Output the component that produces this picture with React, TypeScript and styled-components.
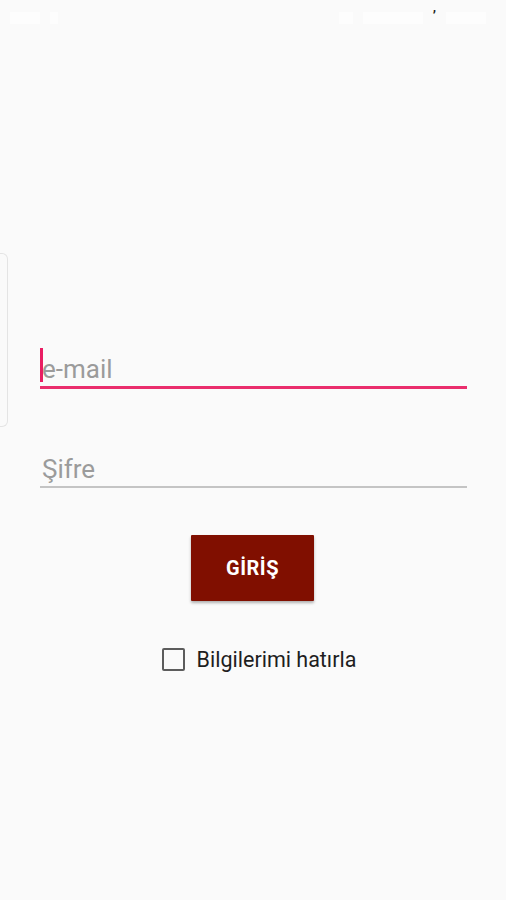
import React from 'react'
import styled, { createGlobalStyle } from 'styled-components'

const GlobalStyle = createGlobalStyle`
  html, body {
    margin: 0;
    padding: 0;
    background: #fafafa;
    font-family: Roboto, "Noto Sans", sans-serif;
  }
  * { box-sizing: border-box; }
`

export default function App() {
  return (
    <>
      <GlobalStyle />
      <Screen>
        <StatusBar>
          <StatusGroup>
            <Faint $w={30} />
            <Faint $w={8} />
          </StatusGroup>
          <StatusGroup>
            <Faint $w={14} />
            <Faint $w={60} />
            <Mark>’</Mark>
            <Faint $w={40} />
          </StatusGroup>
        </StatusBar>
        <SideTab />
        <Form>
          <Field>
            <Caret />
            <TextInput placeholder="e-mail" $active />
          </Field>
          <Field $gap={63}>
            <TextInput placeholder="Şifre" type="password" />
          </Field>
          <LoginButton>GİRİŞ</LoginButton>
          <RememberRow>
            <Box />
            <RememberText>Bilgilerimi hatırla</RememberText>
          </RememberRow>
        </Form>
      </Screen>
    </>
  )
}

const Screen = styled.div`
position: relative;
min-height: 900px;
display: flex;
flex-direction: column;
background: #fafafa;
`
const StatusBar = styled.div`
height: 36px;
display: flex;
justify-content: space-between;
align-items: center;
padding: 0 20px 0 10px;
`
const StatusGroup = styled.div`
display: flex;
align-items: center;
gap: 10px;
`
const Faint = styled.span<{ $w: number }>`
display: block;
width: ${({ $w }) => $w}px;
height: 12px;
background: #fdfdfd;
`
const Mark = styled.span`
font-size: 14px;
font-weight: bold;
color: #222;
line-height: 1;
margin-top: -4px;
`
const SideTab = styled.div`
position: absolute;
left: 0;
top: 253px;
width: 8px;
height: 174px;
border: 1px solid #e4e4e4;
border-left: none;
border-radius: 0 6px 6px 0;
`
const Form = styled.div`
display: flex;
flex-direction: column;
padding: 316px 39px 0 40px;
`
const Field = styled.div<{ $gap?: number }>`
position: relative;
margin-top: ${({ $gap }) => $gap ?? 0}px;
`
const Caret = styled.span`
position: absolute;
left: 0;
top: -4px;
width: 3px;
height: 34px;
background: #e91e63;
`
const TextInput = styled.input<{ $active?: boolean }>`
display: block;
width: 100%;
height: ${({ $active }) => ($active ? 37 : 36)}px;
padding: 0 0 0 2px;
border: none;
border-bottom: ${({ $active }) => ($active ? '3px solid #ea2e6d' : '2px solid #c4c4c4')};
background: transparent;
font-family: Roboto, sans-serif;
font-size: 26px;
line-height: 34px;
color: #333;
outline: none;
&::placeholder {
  color: #9b9b9b;
}
`
const LoginButton = styled.button`
align-self: center;
margin-top: 47px;
margin-left: -2px;
width: 123px;
height: 66px;
border: none;
border-radius: 1px;
background: #800f00;
color: #ffffff;
font-family: Roboto, sans-serif;
font-weight: bold;
font-size: 20px;
letter-spacing: 0.5px;
box-shadow: 0 2px 3px rgba(0, 0, 0, 0.3);
`
const RememberRow = styled.label`
align-self: center;
margin-top: 46px;
margin-left: 11px;
display: flex;
align-items: center;
gap: 12px;
`
const Box = styled.span`
display: block;
width: 23px;
height: 23px;
border: 2px solid #5c5c5c;
border-radius: 2px;
`
const RememberText = styled.span`
font-family: Roboto, sans-serif;
font-size: 21.5px;
color: #1e1e1e;
`
